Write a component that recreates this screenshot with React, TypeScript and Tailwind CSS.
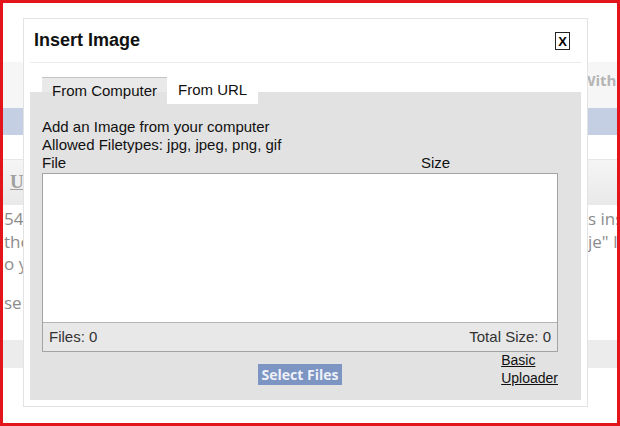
import React from "react";

const sans = { fontFamily: '"Liberation Sans", Arial, sans-serif' };

function BackgroundPage() {
  return (
    <div className="flex flex-col text-[#8c8c8c]" style={{ fontFamily: '"Open Sans", sans-serif' }}>
      <div className="h-[59px]" />
      <div className="h-[46px] bg-[#f6f6f6] flex items-start pt-[7px]">
        <span className="ml-[578px] whitespace-nowrap text-[15px] leading-[22px] font-bold text-[#b4b4b4]">With</span>
      </div>
      <div className="h-[27px] bg-[#c5cfe3]" />
      <div className="h-[25px] border-b border-[#e6e6e6]" />
      <div className="h-[45px] bg-gradient-to-b from-[#f5f5f5] to-[#e9e9e9] flex items-center">
        <span
          className="ml-[7px] text-[19px] font-bold underline text-[#a0a0a0]"
          style={{ fontFamily: '"Liberation Serif", serif' }}
        >
          U
        </span>
      </div>
      <div className="pt-[3px] text-[17px] leading-[22.5px]">
        <div className="flex whitespace-nowrap">
          <span className="w-[585px] shrink-0 pl-[1px]">54</span>
          <span>s ins</span>
        </div>
        <div className="flex whitespace-nowrap">
          <span className="w-[585px] shrink-0 pl-[1px]">the</span>
          <span>je" I</span>
        </div>
        <div className="flex whitespace-nowrap">
          <span className="w-[585px] shrink-0 pl-[1px]">o y</span>
        </div>
        <div className="mt-[16px] flex whitespace-nowrap">
          <span className="w-[585px] shrink-0 pl-[1px]">se</span>
        </div>
      </div>
      <div className="mt-[26px] h-[28px] bg-[#ececec]" />
    </div>
  );
}

function InsertImageDialog() {
  return (
    <div
      className="absolute left-[20px] top-[15px] w-[565px] h-[389px] bg-white border border-[#e3e3e3] flex flex-col"
      style={sans}
    >
      {/* header */}
      <div className="h-[43px] flex items-center justify-between pl-[10px] pr-[17px]">
        <span className="text-[18px] font-bold text-[#111]">Insert Image</span>
        <span className="mt-[1px] w-[15px] h-[18px] border border-[#222] flex items-center justify-center text-[13px] font-bold text-black leading-none">
          X
        </span>
      </div>
      <div className="mx-[6px] h-px bg-[#ececec]" />

      {/* tabs + panel */}
      <div className="mx-[6px] mt-[14px] flex flex-col">
        <div className="relative z-10 h-[15px] pl-[12px] flex items-start text-[15px] text-[#111]">
          <div className="h-[15px] bg-[#e9e9e9] border-t border-[#c4c4c4] px-[10px] flex items-start">
            <span className="leading-[26px] -mb-[12px]">From Computer</span>
          </div>
          <div className="h-[27px] bg-white px-[11px] flex items-center">
            <span>From URL</span>
          </div>
        </div>

        <div className="bg-[#e2e2e2] pt-[26px] pb-[13px] pl-[12px] pr-[23px] text-[#111]">
          <div className="text-[15px] leading-[18px]">
            <div>Add an Image from your computer</div>
            <div>Allowed Filetypes: jpg, jpeg, png, gif</div>
            <div className="flex">
              <span className="flex-1">File</span>
              <span className="w-[137px]">Size</span>
            </div>
          </div>

          {/* file list */}
          <div className="mt-px border border-[#a3a3a3] flex flex-col">
            <div className="h-[148px] bg-white" />
            <div className="h-[29px] bg-[#e8e8e8] border-t border-[#b4b4b4] px-[6px] flex items-center justify-between text-[15px] text-[#333]">
              <span>Files: 0</span>
              <span>Total Size: 0</span>
            </div>
          </div>

          {/* actions */}
          <div className="grid grid-cols-[1fr_auto_1fr] items-start">
            <div />
            <button
              type="button"
              className="mt-[12px] h-[21px] w-[84px] bg-[#7d95c3] text-[14px] font-bold text-[#eef1f8] flex items-center justify-center"
              style={{ fontFamily: '"Open Sans", sans-serif' }}
            >
              Select Files
            </button>
            <a
              href="#"
              className="justify-self-end -mt-[1px] text-[14px] leading-[18px] underline text-[#111]"
            >
              Basic
              <br />
              Uploader
            </a>
          </div>
        </div>
      </div>
    </div>
  );
}

export default function App() {
  return (
    <div className="relative w-[620px] h-[426px] overflow-hidden bg-white border-[3px] border-[#e3151b]">
      <BackgroundPage />
      <InsertImageDialog />
    </div>
  );
}
